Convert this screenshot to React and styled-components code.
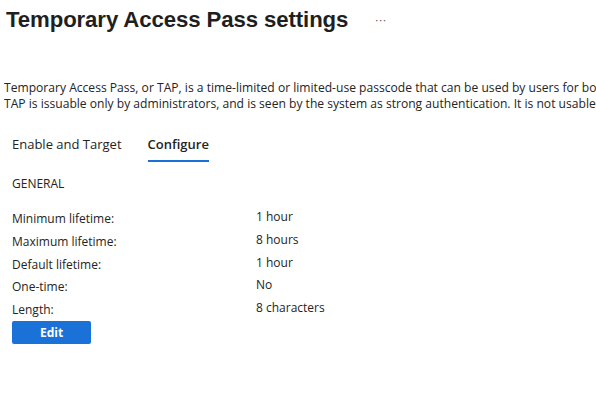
import React from 'react';
import styled, { createGlobalStyle } from 'styled-components';

const GlobalStyle = createGlobalStyle`
  body {
    margin: 0;
    background: #ffffff;
    font-family: "Open Sans", "Noto Sans", sans-serif;
    color: #242424;
  }
`;

const Page = styled.div`
  width: 596px;
  height: 393px;
  overflow: hidden;
  background: #fff;
`;

const Header = styled.div`
  display: flex;
  align-items: center;
  padding: 6px 0 0 6px;
  height: 28px;
`;

const Title = styled.h1`
  margin: 0;
  font-family: "Liberation Sans", Arial, sans-serif;
  font-size: 22.2px;
  font-weight: 700;
  color: #1f1f1f;
  letter-spacing: -0.1px;
`;

const More = styled.span`
  margin-left: 27px;
  font-size: 11px;
  color: #555;
  letter-spacing: 1px;
  margin-top: -2px;
`;

const Description = styled.p`
  margin: 46px 0 0 4px;
  font-size: 12.1px;
  line-height: 16px;
  white-space: nowrap;
  overflow: hidden;
  color: #242424;
`;

const Tabs = styled.div`
  display: flex;
  gap: 26px;
  margin: 19px 0 0 12px;
`;

const Tab = styled.div`
  font-size: 13px;
  font-weight: ${p => (p.$active ? 600 : 400)};
  color: #242424;
  padding: 4px 0 7px;
  border-bottom: 2px solid ${p => (p.$active ? '#1a6fd8' : 'transparent')};
`;

const Section = styled.div`
  padding: 13px 0 0 12px;
`;

const SectionTitle = styled.div`
  font-size: 12px;
  margin-bottom: 16px;
`;

const Grid = styled.div`
  display: grid;
  grid-template-columns: 244px auto;
`;

const Label = styled.div`
  font-size: 12px;
  line-height: 22.75px;
`;

const Value = styled.div`
  font-size: 12px;
  line-height: 22.75px;
  margin-top: -2px;
`;

const EditButton = styled.button`
  display: block;
  width: 79px;
  height: 23px;
  margin-top: -1px;
  background: #1a72d9;
  color: #fff;
  border: none;
  border-radius: 2px;
  font-family: "Open Sans", sans-serif;
  font-size: 12px;
  font-weight: 700;
`;

const rows = [
  ['Minimum lifetime:', '1 hour'],
  ['Maximum lifetime:', '8 hours'],
  ['Default lifetime:', '1 hour'],
  ['One-time:', 'No'],
  ['Length:', '8 characters'],
];

export default function App() {
  return (
    <Page>
      <GlobalStyle />
      <Header>
        <Title>Temporary Access Pass settings</Title>
        <More>···</More>
      </Header>
      <Description>
        Temporary Access Pass, or TAP, is a time-limited or limited-use passcode that can be used by users for bootstrapping new accounts, account recovery, or when other auth methods are unavailable.
        <br />
        TAP is issuable only by administrators, and is seen by the system as strong authentication. It is not usable for self-service password reset.
      </Description>
      <Tabs>
        <Tab>Enable and Target</Tab>
        <Tab $active>Configure</Tab>
      </Tabs>
      <Section>
        <SectionTitle>GENERAL</SectionTitle>
        <Grid>
          {rows.map(([l, v]) => (
            <React.Fragment key={l}>
              <Label>{l}</Label>
              <Value>{v}</Value>
            </React.Fragment>
          ))}
        </Grid>
        <EditButton>Edit</EditButton>
      </Section>
    </Page>
  );
}
